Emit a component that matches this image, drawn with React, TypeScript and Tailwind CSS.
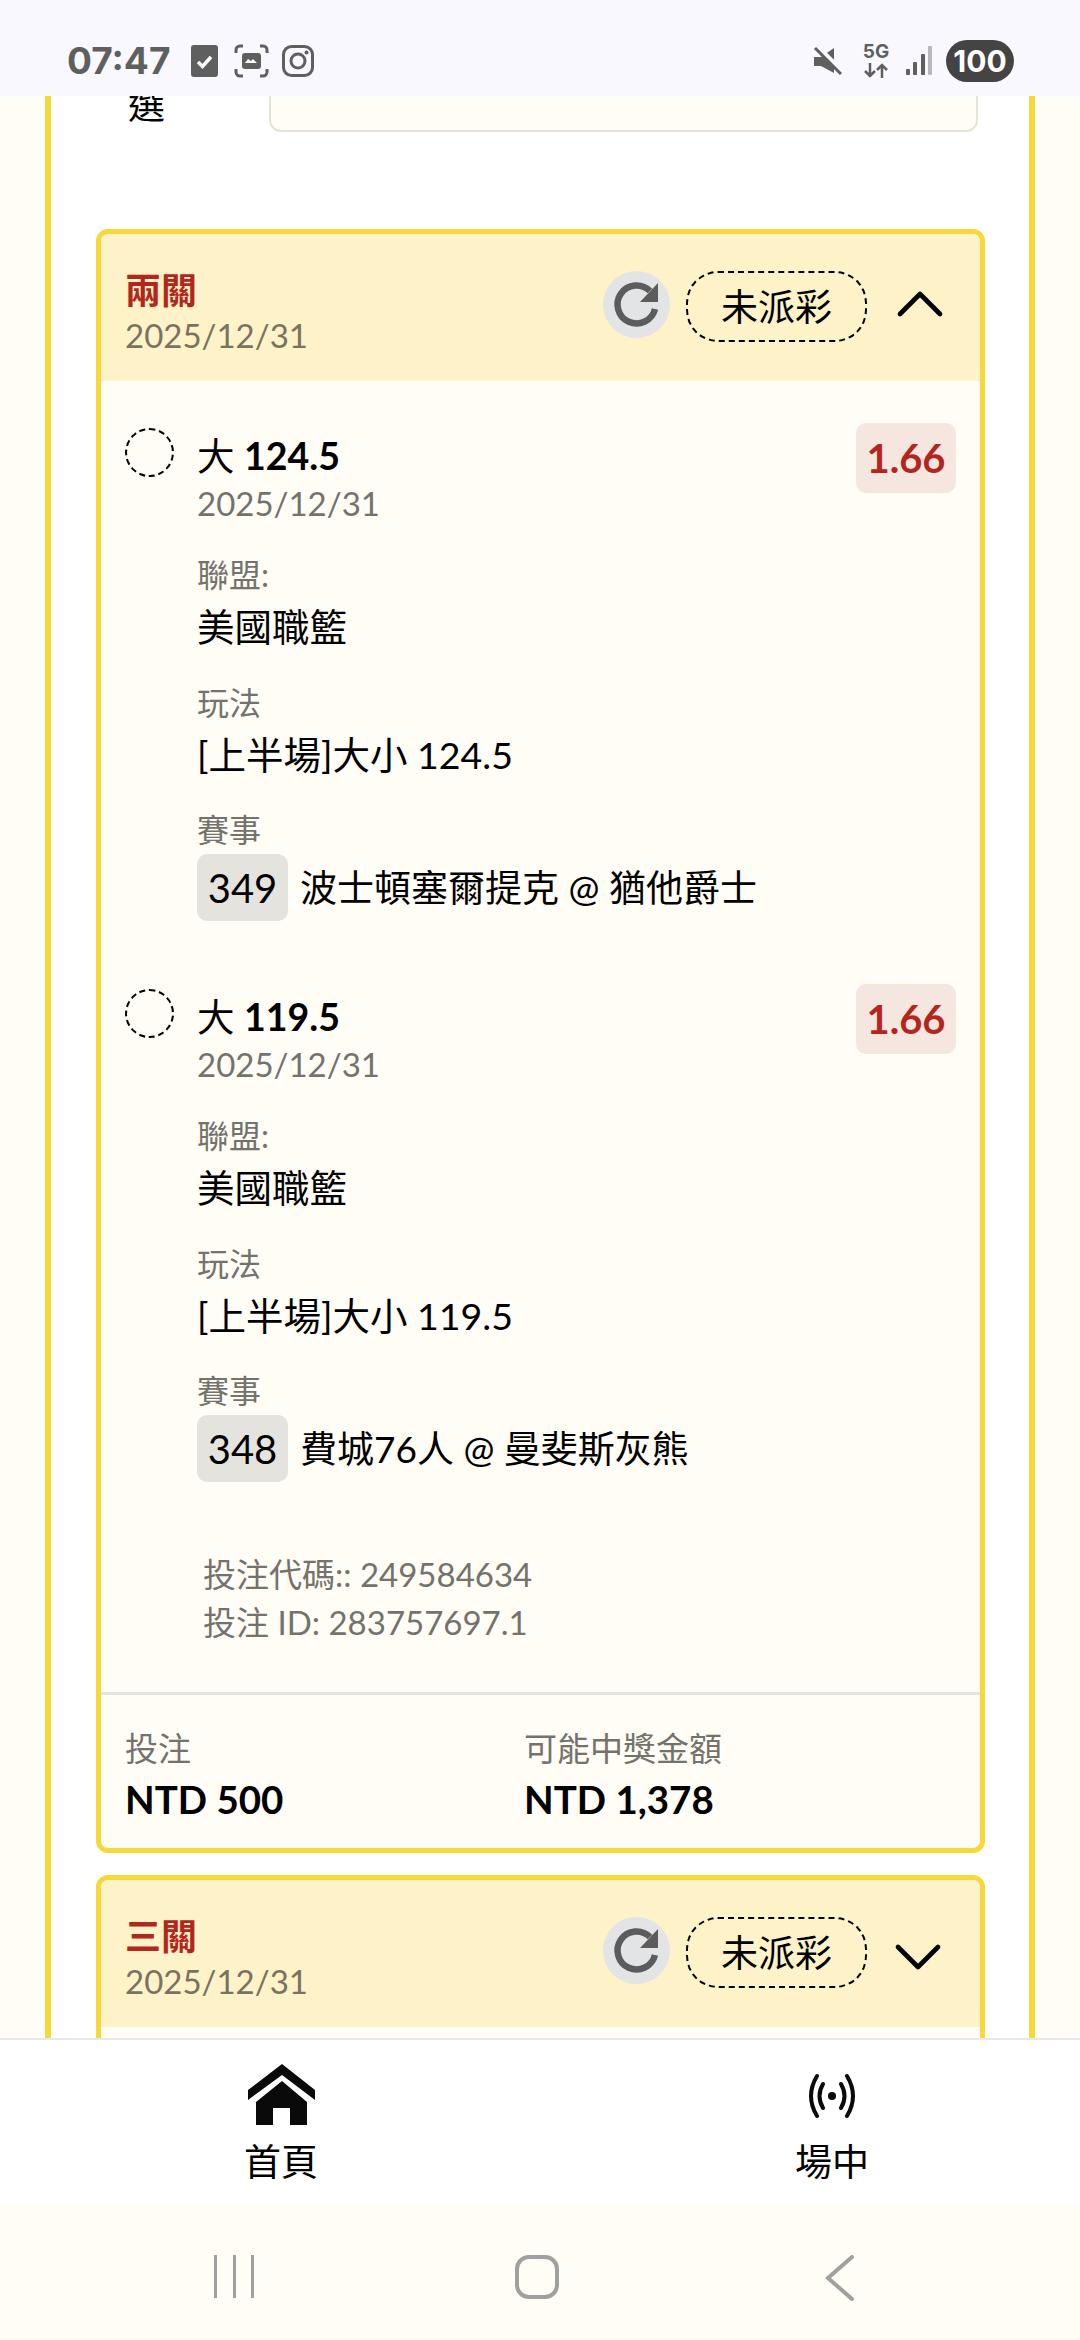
import React from 'react';
import { ChevronDown, ChevronUp } from 'lucide-react';

const FONT = 'font-["Lato","Noto_Sans_CJK_TC",sans-serif]';

const RefreshIcon = () => (
  <svg width="67" height="67" viewBox="0 0 67 67" fill="none">
    <path d="M47 20A19 19 0 1 0 52 38" stroke="#5c5c5c" strokeWidth="6.500" />
    <path d="M55 12V31H37Z" fill="#5c5c5c" />
  </svg>
);

const CardHeader = ({ title, open }: { title: string; open: boolean }) => (
  <div className="flex h-[147px] items-start justify-between bg-[#fdf2c8] pl-[24px] pr-[31px]">
    <div className="pt-[33px]">
      <div className="text-[36px] leading-[46px] font-bold text-[#b3261e]">{title}</div>
      <div className="text-[33px] leading-[44px] text-[#7a7260]">2025/12/31</div>
    </div>
    <div className="flex items-start pt-[37px]">
      <div className="h-[67px] w-[67px] rounded-full bg-[#e3e4e6]">
        <RefreshIcon />
      </div>
      <div className="ml-[16px] flex h-[71px] w-[181px] items-center justify-center rounded-[32px] border-2 border-dashed border-black text-[37px] text-black">
        未派彩
      </div>
      <div className="ml-[22px] flex h-[71px] w-[60px] items-center justify-center">
        {open ? (
          <ChevronUp className="ml-[2px] mt-[-6px] h-[80px] w-[80px] shrink-0 text-black" strokeWidth={1.4} />
        ) : (
          <ChevronDown className="ml-[-3px] mt-[8px] h-[80px] w-[80px] shrink-0 text-black" strokeWidth={1.4} />
        )}
      </div>
    </div>
  </div>
);

const Field = ({ label, value }: { label: string; value: string }) => (
  <div className="mb-[24px]">
    <div className="text-[32px] leading-[50px] text-[#74726c]">{label}</div>
    <div className="text-[37.500px] leading-[54px] text-black">{value}</div>
  </div>
);

const Selection = ({ line, play, num, match }: { line: string; play: string; num: string; match: string }) => (
  <div className="flex h-[561px] pl-[24px] pr-[24px]">
    <div className="mt-[47px] h-[49px] w-[49px] shrink-0 rounded-full border-2 border-dashed border-black" />
    <div className="ml-[23px] flex-1 pt-[51px]">
      <div className="text-[37.500px] leading-[48px] text-black">
        大 <span className="font-bold">{line}</span>
      </div>
      <div className="mb-[24px] text-[33px] leading-[46px] text-[#74726c]">2025/12/31</div>
      <Field label="聯盟:" value="美國職籃" />
      <Field label="玩法" value={play} />
      <div className="text-[32px] leading-[48px] text-[#74726c]">賽事</div>
      <div className="flex items-center">
        <div className="flex h-[67px] w-[91px] items-center justify-center rounded-[10px] bg-[#e5e3de] text-[40px] text-black">
          {num}
        </div>
        <div className="ml-[12px] text-[37px] text-black">{match}</div>
      </div>
    </div>
    <div className="mt-[42px] flex h-[70px] w-[100px] shrink-0 items-center justify-center rounded-[10px] bg-[#f5e6e0] text-[40px] font-bold text-[#b3261e]">
      1.66
    </div>
  </div>
);

const App = () => {
  return (
    <div className={`${FONT} flex h-[2340px] w-[1080px] flex-col overflow-hidden bg-[#fffdf5]`}>
      {/* Status bar */}
      <div className="relative z-10 flex h-[96px] shrink-0 items-start justify-between bg-[#f8f8fe] pl-[67px] pr-[66px] pt-[40px]">
        <div className="flex h-[42px] items-center text-[#5f5f5f]">
          <span className="w-[124px] font-['Inter'] text-[37px] leading-[42px] font-bold">07:47</span>
          <svg width="27" height="32" viewBox="0 0 27 32">
            <rect width="27" height="32" rx="3" fill="#5f5f5f" />
            <path d="M7 17l4.500 4.500L20 12" fill="none" stroke="#fff" strokeWidth="3.500" />
          </svg>
          <svg width="35" height="34" viewBox="0 0 35 34" fill="none" stroke="#5f5f5f" strokeWidth="3" className="ml-[16px]">
            <path d="M9 2H6a4 4 0 0 0-4 4v3M26 2h3a4 4 0 0 1 4 4v3M9 32H6a4 4 0 0 1-4-4v-3M26 32h3a4 4 0 0 0 4-4v-3" />
            <rect x="8" y="9" width="19" height="16" rx="3" fill="#5f5f5f" stroke="none" />
            <path d="M11 19l3-4 3 2 2-2 4 4z" fill="#fff" stroke="none" />
          </svg>
          <svg width="32" height="32" viewBox="0 0 32 32" fill="none" stroke="#5f5f5f" strokeWidth="3" className="ml-[13px]">
            <rect x="1.500" y="1.500" width="29" height="29" rx="8" />
            <circle cx="16" cy="16" r="7" />
            <circle cx="24.500" cy="7.500" r="2" fill="#5f5f5f" stroke="none" />
          </svg>
        </div>
        <div className="flex items-start text-[#5f5f5f]">
          <svg width="29" height="28" viewBox="0 0 29 28" className="mt-[7px]">
            <path d="M1 10h7L21 1v25L8 19H1z" fill="#5f5f5f" />
            <path d="M2 1l26 26" stroke="#f8f8fe" strokeWidth="6" transform="translate(2 -1)" />
            <path d="M2 1l26 26" stroke="#5f5f5f" strokeWidth="3" />
          </svg>
          <div className="ml-[21px] mt-[2px] flex w-[26px] flex-col items-center">
            <span className="font-['Inter'] text-[19px] leading-[20px] font-bold">5G</span>
            <svg width="26" height="15" viewBox="0 0 26 15" fill="none" stroke="#5f5f5f" strokeWidth="2.500" className="mt-[1px]">
              <path d="M7 0v13M2 8l5 5 5-5M19 15V2M14 7l5-5 5 5" />
            </svg>
          </div>
          <svg width="27" height="30" viewBox="0 0 27 30" className="ml-[16px] mt-[6px]">
            <rect x="1" y="23" width="4" height="6" rx="1" fill="#5f5f5f" />
            <rect x="8" y="16" width="4" height="13" rx="1" fill="#5f5f5f" />
            <rect x="16" y="8" width="4" height="21" rx="1" fill="#5f5f5f" />
            <rect x="23" y="0" width="4" height="29" rx="1" fill="#b8b8bc" />
          </svg>
          <div className="ml-[14px] flex h-[42px] w-[68px] items-center justify-center rounded-full bg-[#444444] font-['Inter'] text-[30px] font-bold text-white">
            100
          </div>
        </div>
      </div>

      {/* Scrolled content */}
      <main className="min-h-0 flex-1 overflow-hidden px-[45px]">
        <div className="mt-[-64px] border-x-[6px] border-[#f8d838] bg-white pb-[40px] pl-[45px] pr-[44px]">
          <div className="flex h-[100px] items-end">
            <div className="w-[173px] pl-[32px] text-[37px] text-black">選</div>
            <div className="h-[100px] w-[709px] rounded-[12px] border-2 border-[#e5e3d8] bg-[#fffdf5]" />
          </div>

          {/* Two-leg parlay */}
          <div className="mt-[97px] overflow-hidden rounded-[12px] border-[5px] border-[#f8d838] bg-[#fffdf5]">
            <CardHeader title="兩關" open />
            <Selection line="124.5" play="[上半場]大小 124.5" num="349" match="波士頓塞爾提克 @ 猶他爵士" />
            <Selection line="119.5" play="[上半場]大小 119.5" num="348" match="費城76人 @ 曼斐斯灰熊" />
            <div className="pl-[102px] pt-[47px] text-[33px] leading-[48px] text-[#74726c]">
              <div>投注代碼:: 249584634</div>
              <div>投注 ID: 283757697.1</div>
            </div>
            <div className="mt-[46px] border-t-[3px] border-[#e5e3de] pb-[24px] pl-[24px] pt-[27px]">
              <div className="grid grid-cols-[399px_1fr]">
                <div>
                  <div className="text-[33px] leading-[52px] text-[#74726c]">投注</div>
                  <div className="text-[38.500px] leading-[50px] font-bold text-black">NTD 500</div>
                </div>
                <div>
                  <div className="text-[33px] leading-[52px] text-[#74726c]">可能中獎金額</div>
                  <div className="text-[38.500px] leading-[50px] font-bold text-black">NTD 1,378</div>
                </div>
              </div>
            </div>
          </div>

          {/* Three-leg parlay */}
          <div className="mt-[22px] overflow-hidden rounded-[12px] border-[5px] border-[#f8d838] bg-[#fffdf5]">
            <CardHeader title="三關" open={false} />
            <div className="h-[200px]" />
          </div>
        </div>
      </main>

      {/* Bottom tabs */}
      <nav className="relative z-10 flex h-[167px] shrink-0 border-t-2 border-[#e8e8e8] bg-white pl-[181px]">
        <div className="flex w-[200px] flex-col items-center pt-[24px]">
          <svg width="67" height="61" viewBox="18 14 67 61" fill="#0a0a0a">
            <path d="M52 14L85 40V50L52 25L18 50V40Z" />
            <path d="M52 31L77 52V75H60V58H43V75H26V52Z" />
          </svg>
          <span className="mt-[13px] text-[37px] leading-[48px] text-black">首頁</span>
        </div>
        <div className="ml-[351px] flex w-[200px] flex-col items-center pt-[31px]">
          <svg width="54" height="50" viewBox="0 0 54 50" fill="none" stroke="#0a0a0a" strokeWidth="4" strokeLinecap="round">
            <circle cx="27" cy="25" r="4" fill="#0a0a0a" stroke="none" />
            <path d="M18 13Q11 25 18 37M36 13Q43 25 36 37M12 5Q0 25 12 45M42 5Q54 25 42 45" />
          </svg>
          <span className="mt-[17px] text-[37px] leading-[48px] text-black">場中</span>
        </div>
      </nav>

      {/* System nav */}
      <div className="relative z-10 h-[135px] shrink-0 bg-[#fffdf5]">
        <div className="flex h-full items-start pt-[50px]">
          <div className="ml-[214px] flex h-[43px] w-[40px] justify-between">
            <div className="h-full w-[3px] bg-[#a0a0a0]" />
            <div className="h-full w-[3px] bg-[#a0a0a0]" />
            <div className="h-full w-[3px] bg-[#a0a0a0]" />
          </div>
          <div className="ml-[261px] h-[44px] w-[44px] rounded-[14px] border-[4px] border-[#a0a0a0]" />
          <svg width="30" height="46" viewBox="0 0 30 46" className="ml-[266px]" fill="none" stroke="#a0a0a0" strokeWidth="4" strokeLinecap="round">
            <path d="M27 2L3 23l24 21" />
          </svg>
        </div>
      </div>
    </div>
  );
};

export default App;
